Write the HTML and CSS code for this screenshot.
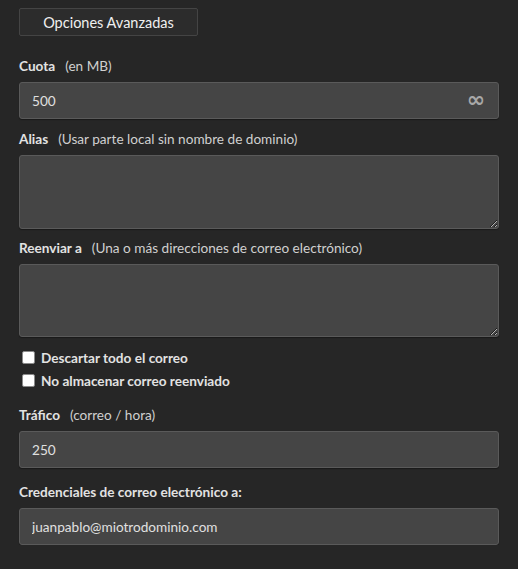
FILE: index.html
```html
<!DOCTYPE html>
<html lang="es">
<head>
<meta charset="utf-8">
<link rel="stylesheet" href="styles.css">
</head>
<body>
<div class="panel">
  <button class="btn-adv" type="button">Opciones Avanzadas</button>

  <div class="field first">
    <div class="label"><b>Cuota</b><span class="hint">(en MB)</span></div>
    <div class="box quota"><input class="inner" type="text" value="500"><span class="inf">∞</span></div>
  </div>

  <div class="field">
    <div class="label"><b>Alias</b><span class="hint">(Usar parte local sin nombre de dominio)</span></div>
    <textarea class="area"></textarea>
  </div>

  <div class="field fwd">
    <div class="label"><b>Reenviar a</b><span class="hint">(Una o más direcciones de correo electrónico)</span></div>
    <textarea class="area short"></textarea>
  </div>

  <div class="checks">
    <label class="check"><span class="cb"></span>Descartar todo el correo</label>
    <label class="check"><span class="cb"></span>No almacenar correo reenviado</label>
  </div>

  <div class="field traffic">
    <div class="label"><b>Tráfico</b><span class="hint">(correo / hora)</span></div>
    <input class="box text" type="text" value="250">
  </div>

  <div class="field cred">
    <div class="label"><b>Credenciales de correo electrónico a:</b></div>
    <input class="box text" type="text" value="juanpablo@miotrodominio.com">
  </div>
</div>
</body>
</html>
```

FILE: styles.css
```css
html, body {
  margin: 0;
  padding: 0;
  background: #262626;
}
body {
  font-family: "Lato", "Open Sans", sans-serif;
  font-size: 13.6px;
  color: #e6e6e6;
}
.panel {
  padding: 8px 19px 0 19px;
  display: flex;
  flex-direction: column;
}
.btn-adv {
  align-self: flex-start;
  width: 179px;
  height: 28px;
  background: #2c2c2c;
  border: 1px solid #444;
  border-radius: 2px;
  color: #f0f0f0;
  font-family: inherit;
  font-size: 14.5px;
  padding: 0;
}
.field {
  display: flex;
  flex-direction: column;
  margin-top: 10px;
}
.field.first { margin-top: 20px; }
.field.fwd { margin-top: 9px; }
.field.traffic { margin-top: 13px; }
.field.cred { margin-top: 14px; }
.label {
  line-height: 20px;
  height: 20px;
  margin-bottom: 6px;
  color: #e0e0e0;
  white-space: nowrap;
}
.label b {
  font-weight: 700;
  color: #e2e2e2;
}
.hint {
  margin-left: 10px;
  color: #d0d0d0;
}
.box {
  box-sizing: border-box;
  width: 480px;
  height: 37px;
  background: #454545;
  border: 1px solid #5a5a5a;
  border-radius: 3px;
  box-shadow: 0 1px 1px rgba(0,0,0,0.35);
}
.quota {
  display: flex;
  align-items: center;
  padding: 0 13px 0 12px;
}
.inner {
  flex: 1;
  background: transparent;
  border: none;
  outline: none;
  color: #e0e0e0;
  font-family: inherit;
  font-size: 13.6px;
  padding: 0;
}
.inf {
  color: #a8a8a8;
  font-family: "DejaVu Sans", sans-serif;
  font-weight: 700;
  font-size: 22px;
  line-height: 1;
  margin-top: -2px;
}
.text {
  display: block;
  color: #e0e0e0;
  font-family: inherit;
  font-size: 13.6px;
  padding: 0 12px;
  outline: none;
}
.area {
  display: block;
  box-sizing: border-box;
  width: 480px;
  height: 74px;
  background: #454545;
  border: 1px solid #5a5a5a;
  border-radius: 3px;
  box-shadow: 0 1px 1px rgba(0,0,0,0.35);
  color: #e0e0e0;
  resize: vertical;
  outline: none;
  margin: 0;
}
.area.short { height: 73px; }
.checks {
  display: flex;
  flex-direction: column;
  margin-top: 9px;
}
.check {
  display: flex;
  align-items: center;
  height: 23px;
  font-weight: 700;
  color: #e2e2e2;
}
.cb {
  box-sizing: border-box;
  width: 13px;
  height: 13px;
  margin-left: 3px;
  margin-right: 6px;
  background: #fff;
  border: 1px solid #8a8a8a;
  border-radius: 2px;
}
```
